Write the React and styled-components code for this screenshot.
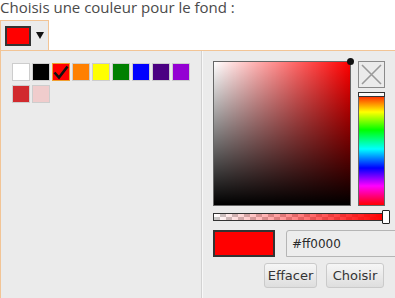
import React from "react";
import styled, { createGlobalStyle } from "styled-components";

const Global = createGlobalStyle`
  html, body { margin: 0; padding: 0; background: #fff; overflow: hidden; }
  body { font-family: "Open Sans", "Noto Sans", sans-serif; width: 395px; height: 298px; }
`;

const Page = styled.div`
  display: flex;
  flex-direction: column;
  width: 395px;
  height: 298px;
`;

const Title = styled.div`
  font-family: "Open Sans", sans-serif;
  font-size: 15px;
  line-height: 15px;
  color: #4a4a4a;
  height: 15px;
  padding-bottom: 5px;
  white-space: nowrap;
`;

const Trigger = styled.div`
  box-sizing: border-box;
  width: 49px;
  height: 30px;
  border: 1px solid #f2c495;
  border-bottom: none;
  background: #ebebeb;
  display: flex;
  align-items: center;
  padding-left: 4px;
  gap: 5px;
`;

const TriggerSwatch = styled.div`
  box-sizing: border-box;
  width: 26px;
  height: 20px;
  border: 2px solid #333;
  background: ${(p) => p.$color};
`;

const Caret = styled.div`
  width: 0;
  height: 0;
  border-left: 4px solid transparent;
  border-right: 4px solid transparent;
  border-top: 7px solid #111;
`;

const Panel = styled.div`
  box-sizing: border-box;
  flex: 1;
  width: 420px;
  border-top: 1px solid #f2c495;
  border-left: 1px solid #f2c495;
  background: #ebebeb;
  display: grid;
  grid-template-columns: 200px 2px 1fr;
`;

const Presets = styled.div`
  padding: 12px 0 0 11px;
  display: grid;
  grid-template-columns: repeat(9, 18px);
  grid-auto-rows: 18px;
  column-gap: 2px;
  row-gap: 4px;
  align-content: start;
`;

const Swatch = styled.div`
  box-sizing: border-box;
  width: 18px;
  height: 18px;
  border: 1px solid ${(p) => (p.$selected ? "#f0a030" : "#cdcdcd")};
  background: ${(p) => p.$color};
  display: flex;
  align-items: center;
  justify-content: center;
`;

const Divider = styled.div`
  background: linear-gradient(to right, #d2d2d2 0 1px, #f8f8f8 1px 2px);
`;

const Picker = styled.div`
  padding: 10px 0 0 10px;
  display: flex;
  flex-direction: column;
  width: 172px;
`;

const TopRow = styled.div`
  display: flex;
  gap: 7px;
`;

const SVBox = styled.div`
  box-sizing: border-box;
  width: 138px;
  height: 145px;
  border: 1px solid #666;
  background:
    linear-gradient(to top, #000, rgba(0, 0, 0, 0)),
    linear-gradient(to right, #fff, rgba(255, 255, 255, 0)),
    #ff0000;
  position: relative;
`;

const SVDot = styled.div`
  position: absolute;
  width: 7px;
  height: 7px;
  border-radius: 50%;
  background: #111;
  right: -4px;
  top: -4px;
`;

const SideColumn = styled.div`
  display: flex;
  flex-direction: column;
  gap: 4px;
  width: 27px;
`;

const ClearBox = styled.div`
  box-sizing: border-box;
  width: 27px;
  height: 27px;
  border: 1px solid #8a8a8a;
  display: flex;
  align-items: center;
  justify-content: center;
`;

const HueBar = styled.div`
  box-sizing: border-box;
  position: relative;
  width: 27px;
  height: 114px;
  border: 1px solid #666;
  background: linear-gradient(
    to bottom,
    #ff0000 0%,
    #ffff00 17%,
    #00ff00 33%,
    #00ffff 50%,
    #0000ff 67%,
    #ff00ff 83%,
    #ff0000 100%
  );
`;

const HueHandle = styled.div`
  box-sizing: border-box;
  position: absolute;
  left: -1px;
  right: -1px;
  top: -1px;
  height: 5px;
  background: #fafafa;
  border: 1px solid #333;
`;

const AlphaTrack = styled.div`
  box-sizing: border-box;
  position: relative;
  margin-top: 7px;
  width: 171px;
  height: 8px;
  border: 1px solid #333;
  background:
    linear-gradient(to right, rgba(255, 0, 0, 0), rgba(255, 0, 0, 1)),
    repeating-conic-gradient(#c8c8c8 0 25%, #ffffff 0 50%) 0 0 / 12px 6px;
`;

const AlphaHandle = styled.div`
  box-sizing: border-box;
  position: absolute;
  right: -7px;
  top: -4px;
  width: 8px;
  height: 14px;
  background: #fff;
  border: 1px solid #222;
  border-radius: 1px;
`;

const ValueRow = styled.div`
  display: flex;
  gap: 11px;
  margin-top: 9px;
  align-items: center;
`;

const Preview = styled.div`
  box-sizing: border-box;
  width: 62px;
  height: 27px;
  border: 2px solid #333;
  background: ${(p) => p.$color};
  flex: none;
`;

const HexInput = styled.div`
  box-sizing: border-box;
  flex: none;
  width: 130px;
  height: 27px;
  border: 1px solid #b5b5b5;
  border-radius: 3px 0 0 0;
  background: #ededed;
  font-family: "DejaVu Sans", sans-serif;
  font-size: 12px;
  color: #2a2a2a;
  display: flex;
  align-items: center;
  padding-left: 5px;
`;

const Actions = styled.div`
  display: flex;
  justify-content: flex-end;
  gap: 9px;
  margin-top: 6px;
  padding-right: 1px;
`;

const Button = styled.button`
  box-sizing: border-box;
  height: 25px;
  width: ${(p) => p.$w}px;
  padding: 0;
  border: 1px solid #cacaca;
  border-radius: 3px;
  background: linear-gradient(to bottom, #f6f6f6, #dedede);
  font-family: "DejaVu Sans", sans-serif;
  font-size: 13px;
  color: #333;
  display: flex;
  align-items: center;
  justify-content: center;
`;

const presets = [
  "#ffffff",
  "#000000",
  "#ff0000",
  "#ff8000",
  "#ffff00",
  "#008000",
  "#0000ff",
  "#4b0082",
  "#9400d3",
  "#d12a2e",
  "#f0cccc",
];

export default function App() {
  return (
    <>
      <Global />
      <Page>
        <Title>Choisis une couleur pour le fond :</Title>
        <Trigger>
          <TriggerSwatch $color="#ff0000" />
          <Caret />
        </Trigger>
        <Panel>
          <Presets>
            {presets.map((c) => (
              <Swatch key={c} $color={c} $selected={c === "#ff0000"}>
                {c === "#ff0000" && (
                  <svg width="16" height="16" viewBox="0 0 16 16">
                    <path
                      d="M1.5 8.5 L6 13.5 L14.5 2.5"
                      fill="none"
                      stroke="#111"
                      strokeWidth="2.6"
                      strokeLinejoin="miter"
                    />
                  </svg>
                )}
              </Swatch>
            ))}
          </Presets>
          <Divider />
          <Picker>
            <TopRow>
              <SVBox>
                <SVDot />
              </SVBox>
              <SideColumn>
                <ClearBox>
                  <svg width="23" height="23" viewBox="0 0 23 23">
                    <path
                      d="M2 2 L21 21 M21 2 L2 21"
                      stroke="#9a9a9a"
                      strokeWidth="1.6"
                    />
                  </svg>
                </ClearBox>
                <HueBar>
                  <HueHandle />
                </HueBar>
              </SideColumn>
            </TopRow>
            <AlphaTrack>
              <AlphaHandle />
            </AlphaTrack>
            <ValueRow>
              <Preview $color="#ff0000" />
              <HexInput>#ff0000</HexInput>
            </ValueRow>
            <Actions>
              <Button $w={53}>Effacer</Button>
              <Button $w={58}>Choisir</Button>
            </Actions>
          </Picker>
        </Panel>
      </Page>
    </>
  );
}
